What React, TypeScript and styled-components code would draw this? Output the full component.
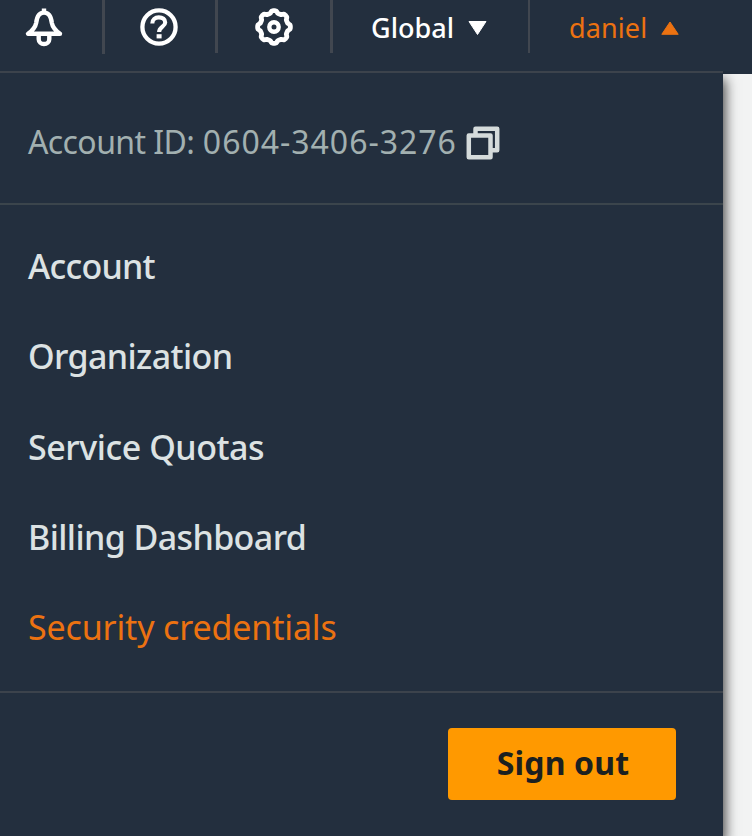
import React from 'react';
import styled, { createGlobalStyle } from 'styled-components';

const GlobalStyle = createGlobalStyle`
  * { box-sizing: border-box; }
  body { margin: 0; background: #f2f3f3; font-family: "Noto Sans", "Open Sans", sans-serif; overflow: hidden; }
  button { font-family: inherit; }
`;

const Page = styled.div`
  width: 752px;
  height: 836px;
  display: flex;
  flex-direction: column;
  background: #f2f3f3;
`;

const TopBar = styled.header`
  height: 71px;
  flex: none;
  display: flex;
  align-items: flex-start;
  background: #232f3e;
`;

const IconButton = styled.button<{ $width: number; $inset: number }>`
  width: ${(p) => p.$width}px;
  height: 54px;
  padding: 7px 0 0 ${(p) => p.$inset}px;
  border: 0;
  background: none;
  display: flex;
  align-items: flex-start;
  svg { display: block; flex: none; }
`;

const Divider = styled.span<{ $width?: number; $height?: number }>`
  width: ${(p) => p.$width ?? 3}px;
  height: ${(p) => p.$height ?? 53}px;
  background: #414750;
`;

const NavButton = styled.button<{ $width: number; $inset: number; $active?: boolean }>`
  width: ${(p) => p.$width}px;
  height: 56px;
  padding: 0 0 0 ${(p) => p.$inset}px;
  border: 0;
  background: none;
  display: flex;
  align-items: center;
  text-align: left;
  font-size: 27px;
  line-height: 56px;
  font-weight: ${(p) => (p.$active ? 400 : 500)};
  letter-spacing: ${(p) => (p.$active ? 0.1 : 0.05)}px;
  color: ${(p) => (p.$active ? '#ec7211' : '#ffffff')};
  white-space: nowrap;
`;

const Caret = styled.svg<{ $gap: number }>`
  display: block;
  flex: none;
  margin-left: ${(p) => p.$gap}px;
`;

const Body = styled.div`
  flex: 1;
  display: flex;
`;

const Menu = styled.aside`
  width: 722.5px;
  flex: none;
  position: relative;
  z-index: 1;
  display: flex;
  flex-direction: column;
  background: #232f3e;
  box-shadow: 2px 8px 12px rgba(0, 0, 0, 0.75);
  clip-path: inset(0 -30px 0 0);
`;

const Content = styled.main`
  flex: 1;
  border-top: 3px solid #232f3e;
`;

const AccountRow = styled.div`
  height: 132px;
  flex: none;
  display: flex;
  align-items: center;
  padding: 7px 0 0 28px;
  border-top: 2px solid #3c434c;
  font-size: 32px;
  line-height: 44px;
  color: #a2b0b0;
  svg { display: block; margin: 2px 0 0 9px; }
`;

const AccountLabel = styled.span`
  letter-spacing: -0.6px;
  white-space: pre;
`;

const AccountNumber = styled.span`
  letter-spacing: 0.98px;
  margin-left: 1px;
`;

const Links = styled.nav`
  height: 488px;
  flex: none;
  padding-top: 16px;
  border-top: 2px solid #3b454c;
  display: flex;
  flex-direction: column;
`;

const MenuLink = styled.a<{ $spacing: number; $selected?: boolean }>`
  height: 90.25px;
  padding-left: 28px;
  font-size: 34px;
  line-height: 91px;
  font-weight: ${(p) => (p.$selected ? 400 : 500)};
  letter-spacing: ${(p) => p.$spacing}px;
  color: ${(p) => (p.$selected ? '#ec7211' : '#dce2e3')};
  white-space: nowrap;
`;

const Footer = styled.footer`
  flex: 1;
  display: flex;
  justify-content: flex-end;
  align-items: flex-start;
  padding: 35px 46.5px 0 0;
  border-top: 2px solid #3c434c;
`;

const SignOut = styled.button`
  width: 228px;
  height: 72px;
  padding: 0 0 3px 2px;
  border: 0;
  border-radius: 4px;
  background: #ff9900;
  color: #1b2020;
  font-size: 32px;
  line-height: 44px;
  font-weight: 700;
  letter-spacing: 0.15px;
`;

const BellIcon = () => (
  <svg width="40" height="40" viewBox="0 0 40 40" fill="none" stroke="#fff" strokeWidth="4.400">
    <path d="M20 1.500V6" />
    <path d="M4 26.800h32c-4.500-3.300-7.300-6.300-8.200-11C27 8.500 24.500 5.600 20 5.600s-7 2.900-7.800 10.200c-.9 4.700-3.700 7.700-8.200 11Z" strokeLinejoin="round" />
    <path d="M14.700 28v4.200a5.300 4.800 0 0 0 10.600 0V28" />
  </svg>
);

const HelpIcon = () => (
  <svg width="40" height="40" viewBox="0 0 40 40" fill="none" stroke="#fff" strokeWidth="4.300">
    <circle cx="20" cy="20" r="16.600" />
    <path d="M13.300 16.500c0-4 2.700-6.100 6.500-6.100 3.800 0 6.400 1.900 6.400 5 0 4.300-6.100 4.100-6.100 9.600" strokeWidth="4.100" />
    <path d="M20.100 27.200v4.200" strokeWidth="5" />
  </svg>
);

const gearOutline = Array.from({ length: 96 }, (_, i) => {
  const a = (i / 96) * Math.PI * 2;
  const r = 15.2 + 1.2 * Math.tanh(2.2 * Math.cos(8 * a));
  return `${i ? 'L' : 'M'}${(20 + r * Math.sin(a)).toFixed(2)} ${(20 - r * Math.cos(a)).toFixed(2)}`;
}).join('') + 'Z';

const GearIcon = () => (
  <svg width="40" height="40" viewBox="0 0 40 40" fill="none" stroke="#fff">
    <path d={gearOutline} strokeWidth="4.800" strokeLinejoin="round" />
    <circle cx="20" cy="20" r="4.700" strokeWidth="4.400" />
  </svg>
);

const CopyIcon = () => (
  <svg width="34" height="34" viewBox="0 0 34 34" fill="none" stroke="#d5dbdb" strokeWidth="4.500" strokeLinejoin="round">
    <path d="M9.500 9V2.800h21.700v21.500H26" />
    <path d="M2.800 9.500h21.700v21.700H2.800Z" />
  </svg>
);

const links = [
  { label: 'Account', spacing: -0.75 },
  { label: 'Organization', spacing: -0.6 },
  { label: 'Service Quotas', spacing: -0.45 },
  { label: 'Billing Dashboard', spacing: -0.6 },
  { label: 'Security credentials', spacing: -0.15, selected: true },
];

export default function App() {
  return (
    <Page>
      <GlobalStyle />
      <TopBar>
        <IconButton $width={102} $inset={24} aria-label="Notifications"><BellIcon /></IconButton>
        <Divider $height={54} />
        <IconButton $width={110} $inset={34} aria-label="Help"><HelpIcon /></IconButton>
        <Divider />
        <IconButton $width={112} $inset={36} aria-label="Settings"><GearIcon /></IconButton>
        <Divider />
        <NavButton $width={195} $inset={38}>
          Global
          <Caret $gap={14} width="19" height="15" viewBox="0 0 19 15"><path d="M1 .5h17L9.500 13.500Z" fill="#fff" stroke="#fff" strokeLinejoin="round" /></Caret>
        </NavButton>
        <Divider $width={2} />
        <NavButton $width={222} $inset={39} $active>
          daniel
          <Caret $gap={14} width="18" height="14" viewBox="0 0 18 14"><path d="M.8 13.300 9 1l8.200 12.300Z" fill="#ec7211" stroke="#ec7211" strokeLinejoin="round" /></Caret>
        </NavButton>
      </TopBar>
      <Body>
        <Menu>
          <AccountRow>
            <AccountLabel>{'Account ID: '}</AccountLabel>
            <AccountNumber>0604-3406-3276</AccountNumber>
            <CopyIcon />
          </AccountRow>
          <Links>
            {links.map((l) => (
              <MenuLink key={l.label} $spacing={l.spacing} $selected={l.selected}>{l.label}</MenuLink>
            ))}
          </Links>
          <Footer><SignOut>Sign out</SignOut></Footer>
        </Menu>
        <Content />
      </Body>
    </Page>
  );
}
